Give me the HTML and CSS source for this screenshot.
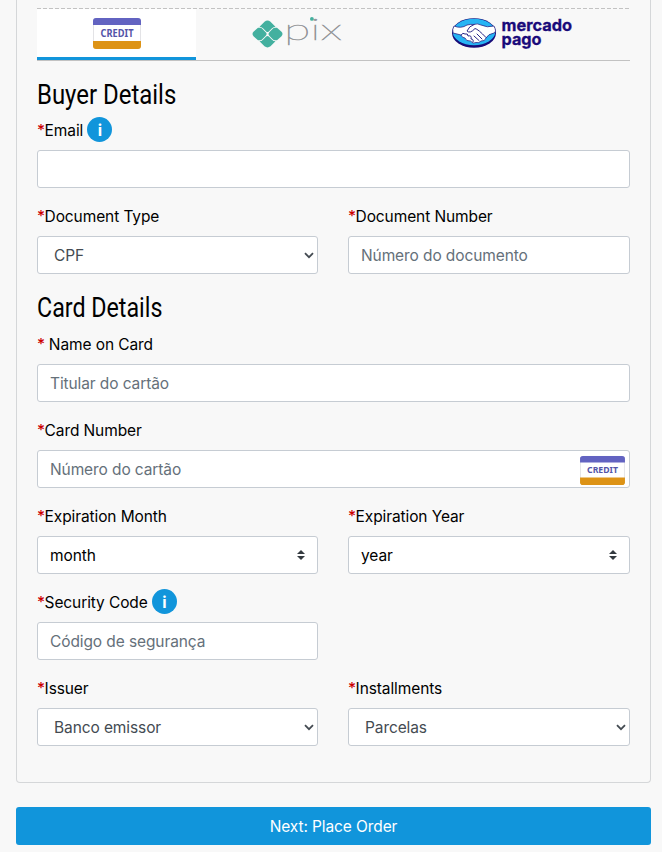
FILE: index.html
```html
<!DOCTYPE html>
<html lang="en">
<head>
<meta charset="utf-8">
<title>Payment</title>
<link rel="stylesheet" href="styles.css">
</head>
<body>
<main class="card">
  <nav class="tabs">
    <a class="tab tab-credit active">
      <svg width="48" height="31" viewBox="0 0 48 31">
        <rect x=".5" y=".5" width="47" height="30" rx="2.5" fill="#fff" stroke="#e3e3e6"/>
        <path d="M0 7V3Q0 0 3 0H45Q48 0 48 3V7Z" fill="#6263c1"/>
        <path d="M0 23V28Q0 31 3 31H45Q48 31 48 28V23Z" fill="#dd9316"/>
        <text x="7.5" y="18.6" class="credit-text" textLength="33" lengthAdjust="spacingAndGlyphs">CREDIT</text>
      </svg>
    </a>
    <a class="tab tab-pix">
      <svg width="90" height="36" viewBox="0 0 90 36">
        <g fill="#43b09f">
          <path d="M7.5 8.7L12.5 3.7Q15.5 1.4 18.5 3.7L23.5 8.7Q21.5 8.7 20 10.3L16.8 13.5Q15.5 14.6 14.2 13.5L11 10.3Q9.5 8.7 7.5 8.7Z"/>
          <path d="M7.5 23.3L12.5 28.3Q15.5 30.6 18.5 28.3L23.5 23.3Q21.5 23.3 20 21.7L16.8 18.5Q15.5 17.4 14.2 18.5L11 21.7Q9.5 23.3 7.5 23.3Z"/>
          <path d="M6 9.7H8Q9.5 9.7 10.5 11L13.7 14.3Q15.5 16 13.7 17.7L10.5 21Q9.5 22.3 8 22.3H6L1.5 18.2Q-.5 16 1.5 13.8Z"/>
          <path d="M25 9.7H23Q21.5 9.7 20.5 11L17.3 14.3Q15.5 16 17.3 17.7L20.5 21Q21.5 22.3 23 22.3H25L29.5 18.2Q31.5 16 29.5 13.8Z"/>
        </g>
        <g class="pix-text">
          <text x="32" y="21.5" textLength="58" lengthAdjust="spacingAndGlyphs">pix</text>
        </g>
        <circle cx="59.9" cy="0.9" r="1.9" fill="#43b09f"/>
      </svg>
    </a>
    <a class="tab tab-mp">
      <svg width="121" height="34" viewBox="0 0 121 34">
        <ellipse cx="22" cy="15" rx="22" ry="14.8" fill="#170b78"/>
        <ellipse cx="22" cy="14" rx="21.2" ry="13.2" fill="#26b4f4"/>
        <path d="M2 8Q9 11 15 7Q19 6 22 6.5Q25 5 29 7Q35 10 42 8Q45 14 42 15Q36 16 34 20Q33 23.5 29 23Q27 25.5 24 24.5Q21 26.5 18.5 23Q14 23.5 13 20Q10 20 9 17L1 15Q0 11 2 8Z" fill="#fff" stroke="#2a2787" stroke-width=".8"/>
        <path d="M22 6.5Q17 8 15 13Q18 16 23 10.5Q26 11 34 19.5M25 16L30 21M22 18L27 22.5M9 17Q11 14 13 16Q16 15 16 18Q20 17 19 21Q22 21 21 24" fill="none" stroke="#2a2787" stroke-width="1" stroke-linecap="round"/>
        <g class="mp-text">
          <text x="49.5" y="13" textLength="70.5" lengthAdjust="spacingAndGlyphs">mercado</text>
          <text x="49.5" y="26.5" textLength="40" lengthAdjust="spacingAndGlyphs">pago</text>
        </g>
      </svg>
    </a>
  </nav>

  <h2><span class="buyer">Buyer Details</span></h2>
  <div class="field">
    <label for="email"><b>*</b>Email <i class="info">i</i></label>
    <input id="email" type="text">
  </div>
  <div class="row">
    <div class="field">
      <label><b>*</b>Document Type</label>
      <div class="control select"><span>CPF</span><svg class="chev" width="10" height="7" viewBox="0 0 10 7"><path d="M1 1.2L5 5.2L9 1.2"/></svg></div>
    </div>
    <div class="field">
      <label for="docnum"><b>*</b>Document Number</label>
      <input id="docnum" type="text" placeholder="Número do documento">
    </div>
  </div>

  <h2 class="second"><span class="carddet">Card Details</span></h2>
  <div class="field">
    <label for="name"><b>*</b> Name on Card</label>
    <input id="name" type="text" placeholder="Titular do cartão">
  </div>
  <div class="field">
    <label><b>*</b>Card Number</label>
    <div class="control number">
      <span>Número do cartão</span>
      <svg width="45" height="29" viewBox="0 0 48 31">
        <rect x=".5" y=".5" width="47" height="30" rx="2.5" fill="#fff" stroke="#e3e3e6"/>
        <path d="M0 7V3Q0 0 3 0H45Q48 0 48 3V7Z" fill="#6263c1"/>
        <path d="M0 23V28Q0 31 3 31H45Q48 31 48 28V23Z" fill="#dd9316"/>
        <text x="7.5" y="18.6" class="credit-text" textLength="33" lengthAdjust="spacingAndGlyphs">CREDIT</text>
      </svg>
    </div>
  </div>
  <div class="row">
    <div class="field">
      <label><b>*</b>Expiration Month</label>
      <div class="control custom"><span>month</span><svg width="8" height="10" viewBox="0 0 8 10"><path d="M4 0L8 4H0ZM0 6H8L4 10Z" fill="#343a40"/></svg></div>
    </div>
    <div class="field">
      <label><b>*</b>Expiration Year</label>
      <div class="control custom"><span>year</span><svg width="8" height="10" viewBox="0 0 8 10"><path d="M4 0L8 4H0ZM0 6H8L4 10Z" fill="#343a40"/></svg></div>
    </div>
  </div>
  <div class="row">
    <div class="field">
      <label for="code"><b>*</b>Security Code <i class="info">i</i></label>
      <input id="code" type="text" placeholder="Código de segurança">
    </div>
  </div>
  <div class="row">
    <div class="field">
      <label><b>*</b>Issuer</label>
      <div class="control select"><span>Banco emissor</span><svg class="chev" width="10" height="7" viewBox="0 0 10 7"><path d="M1 1.2L5 5.2L9 1.2"/></svg></div>
    </div>
    <div class="field">
      <label><b>*</b>Installments</label>
      <div class="control select"><span>Parcelas</span><svg class="chev" width="10" height="7" viewBox="0 0 10 7"><path d="M1 1.2L5 5.2L9 1.2"/></svg></div>
    </div>
  </div>
</main>
<button class="next">Next: Place Order</button>
</body>
</html>
```
FILE: styles.css
```css
* { box-sizing: border-box; }
body {
  margin: 0;
  padding: 0 11px 7px 16px;
  height: 852px;
  overflow: hidden;
  background: #f8f8f8;
  color: #000;
  font: 15.5px/24px Inter, "Liberation Sans", sans-serif;
  letter-spacing: -0.1px;
}
svg { overflow: visible; }
.card {
  height: 783px;
  padding: 8px 20px 20px;
  border: 1px solid #d5d7d9;
  border-top: 0;
  border-radius: 0 0 4px 4px;
}
.tabs {
  display: flex;
  height: 53px;
  margin-bottom: 15px;
  border-bottom: 1px solid #c2c2c2;
  background: repeating-linear-gradient(90deg, #c2c2c2 0 4px, transparent 4px 6px) top / 100% 1px no-repeat;
}
.tab {
  display: flex;
  justify-content: center;
  padding-top: 10px;
}
.tab-credit { width: 159px; margin-top: 1px; padding-top: 9px; }
.tab-pix { width: 201px; }
.tab-mp { width: 230px; }
.active { background: #fff; border-bottom: 3px solid #1195db; }
.credit-text { font: 700 9.8px "Noto Sans", sans-serif; letter-spacing: 0; fill: #5354a8; }
.pix-text { font: 100 29px Lato, sans-serif; letter-spacing: 0; fill: #939598; stroke: #939598; stroke-width: 0.5; }
.mp-text { font: 700 16px Inter, sans-serif; letter-spacing: 0; fill: #190a7a; stroke: #190a7a; stroke-width: 0.3; }

h2 {
  height: 34px;
  margin: 0 0 8px;
  font: 400 28px/37px Roboto, sans-serif;
  letter-spacing: 0;
  white-space: nowrap;
}
h2.second { line-height: 35px; }
h2 span { display: inline-block; transform-origin: left; }
.buyer { transform: scaleX(.855); }
.carddet { transform: scaleX(.83); }

.row {
  display: grid;
  grid-template-columns: 281px 282px;
  gap: 30px;
}
.field { margin-bottom: 16px; }
label {
  display: flex;
  align-items: center;
  height: 24px;
  margin-bottom: 8px;
  padding-top: 2px;
  white-space: pre;
}
label b { margin-right: -0.4px; color: #cc0000; font-weight: 500; }
.info {
  display: flex;
  align-items: center;
  justify-content: center;
  width: 25px;
  height: 25px;
  margin-top: -3px;
  border-radius: 50%;
  background: #1195db;
  color: #fff;
  font: 700 16px/24px Inter, sans-serif;
}
input, .control {
  display: flex;
  align-items: center;
  justify-content: space-between;
  width: 100%;
  height: 38px;
  padding: 0 12px;
  border: 1px solid #c6ccd3;
  border-radius: 3px;
  background: #fff;
  font: inherit;
  letter-spacing: inherit;
}
.control span { padding-top: 1px; }
input::placeholder { color: #65707a; opacity: 1; }
.select { padding: 0 3px 0 16px; color: #444b52; }
.chev path { fill: none; stroke: #444b52; stroke-width: 1.8; }
.number { padding-right: 4px; color: #65707a; }
.number svg { margin-top: 2px; }
.next {
  display: block;
  width: 100%;
  height: 38px;
  margin-top: 24px;
  padding: 1px 0 0;
  border: 0;
  border-radius: 3px;
  background: #1195db;
  color: #fff;
  font: inherit;
  letter-spacing: inherit;
}
```
